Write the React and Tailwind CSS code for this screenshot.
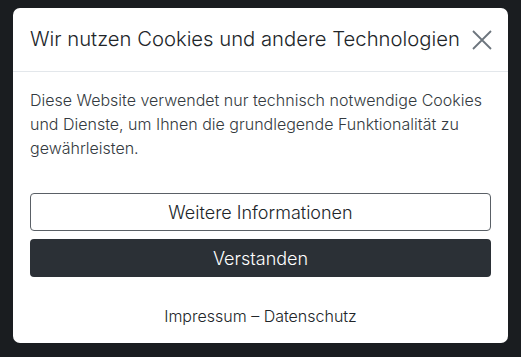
import React from "react";

const App = () => {
  return (
    <div
      className="w-[521px] h-[357px] bg-[#1a1d20] pt-[8px] px-[13px] overflow-hidden"
      style={{ fontFamily: "Inter, 'Liberation Sans', sans-serif" }}
    >
      <div className="bg-white rounded-[7px] h-[335px] flex flex-col">
        <div className="h-[64px] flex items-center justify-between pl-[17px] pr-[15px] border-b border-[#e3e7eb]">
          <h1 className="text-[20.25px] font-light text-[#212529] leading-none">
            Wir nutzen Cookies und andere Technologien
          </h1>
          <svg width="22" height="22" viewBox="0 0 22 22" className="text-[#6c757d]">
            <path d="M2 2 L20 20 M20 2 L2 20" stroke="currentColor" strokeWidth="1.8" fill="none" />
          </svg>
        </div>
        <div className="px-[17px] pt-[16px]">
          <p className="text-[16px] font-light leading-[24px] text-[#343a40]">
            Diese Website verwendet nur technisch notwendige Cookies und Dienste, um Ihnen die grundlegende Funktionalität zu gewährleisten.
          </p>
          <div className="mt-[33px] flex flex-col gap-[8px]">
            <button className="h-[38px] w-full rounded-[4px] border border-[#5a6066] bg-white text-[18px] font-light text-[#212529]">
              Weitere Informationen
            </button>
            <button className="h-[38px] w-full rounded-[4px] bg-[#2b3036] text-[18px] font-light text-white">
              Verstanden
            </button>
          </div>
          <p className="mt-[27px] text-center text-[16px] font-light leading-[24px] text-[#212529]">
            Impressum – Datenschutz
          </p>
        </div>
      </div>
    </div>
  );
};

export default App;
